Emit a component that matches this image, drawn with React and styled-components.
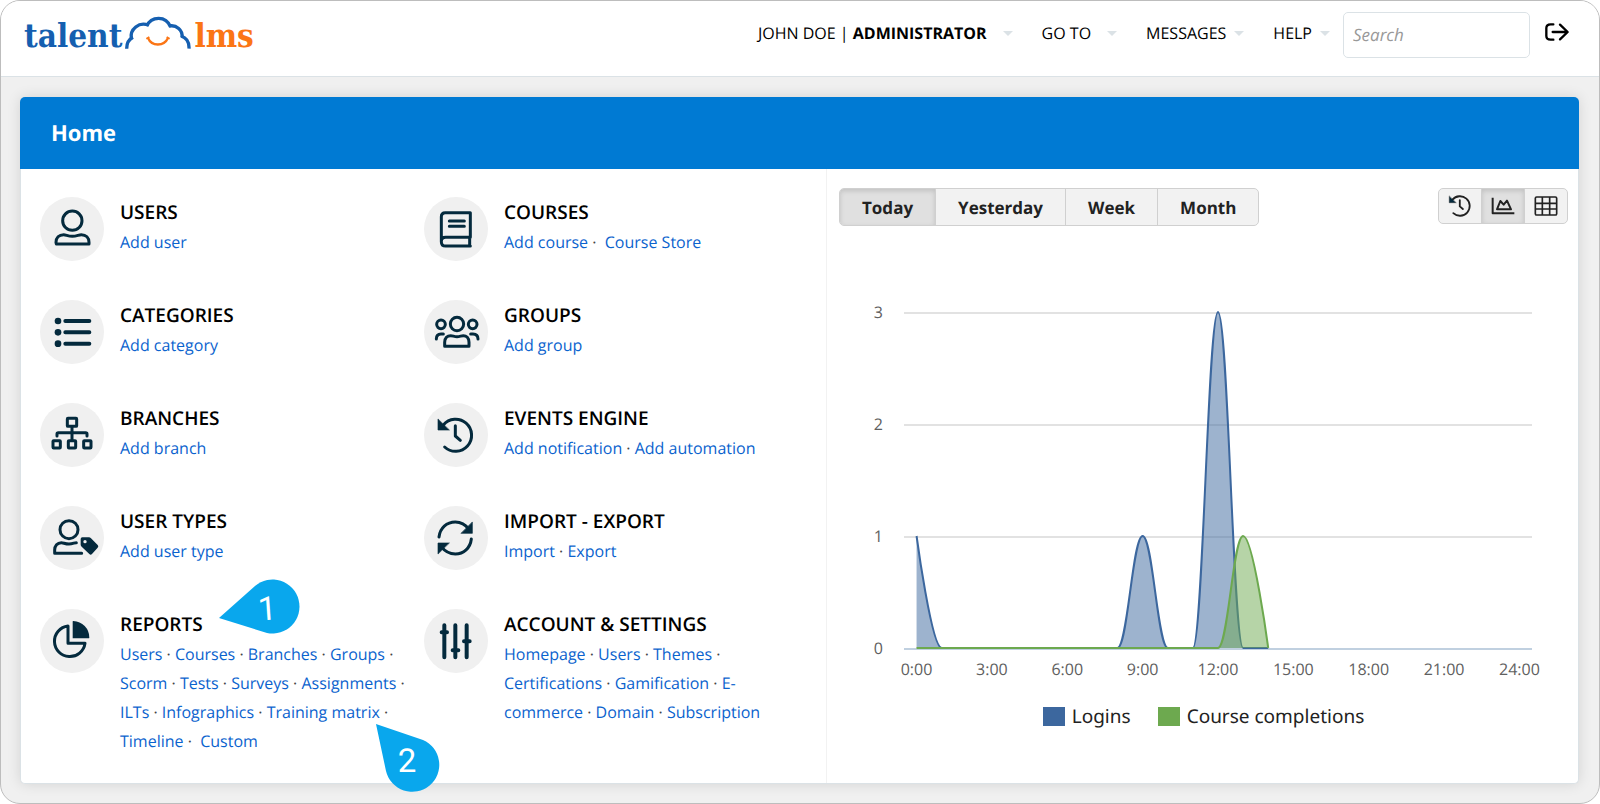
import React from "react";
import styled, { createGlobalStyle, css } from "styled-components";

const GlobalStyle = createGlobalStyle`
  *, *::before, *::after { box-sizing: border-box; }
  body {
    margin: 0;
    background: #fff;
    color: #000;
    font-family: "Open Sans", "Noto Sans", sans-serif;
    text-rendering: geometricPrecision;
  }
  button, input { font: inherit; color: inherit; text-rendering: inherit; }
`;

const ink = "#042a3d";

const Page = styled.div`
  min-height: 100vh;
  display: flex;
  flex-direction: column;
  background: #f0f0f0;
  border: 1px solid #bdbdbd;
  border-radius: 20px;
  overflow: hidden;
`;

const TopBar = styled.header`
  display: flex;
  align-items: flex-start;
  justify-content: space-between;
  height: 76px;
  padding: 11px 29px 0 23px;
  background: #fff;
  border-bottom: 1px solid #dbe2e6;
`;

const Logo = styled.a`
  display: flex;
  align-items: flex-start;
  gap: 3px;
  height: 48px;
  font-family: "DejaVu Serif Condensed", "DejaVu Serif", serif;
  font-stretch: condensed;
  font-size: 33px;
  font-weight: 700;
  line-height: 48px;
  text-decoration: none;
  color: #155fb0;
`;

const LogoAccent = styled.span`
  color: #fb7515;
`;

const Nav = styled.nav`
  display: flex;
  align-items: flex-start;
`;

const NavButton = styled.button`
  display: flex;
  align-items: center;
  gap: ${(p) => (p.$wide ? 16 : 8)}px;
  height: 42px;
  margin-right: ${(p) => (p.$last ? 13 : 29)}px;
  padding: 0;
  border: 0;
  background: none;
  font-size: 16px;
  white-space: nowrap;
  cursor: pointer;

  b { font-weight: 700; }

  &::after {
    content: "";
    border: 5px solid transparent;
    border-top-color: #dbe2e6;
    border-bottom: 0;
  }
`;

const Search = styled.input`
  width: 187px;
  height: 46px;
  padding: 0 9px 2px;
  border: 1px solid #dbe2e6;
  border-radius: 5px;
  background: #fff;
  font-size: 17px;
  font-style: italic;

  &::placeholder { color: #999; opacity: 1; }
`;

const IconButton = styled.button`
  display: flex;
  margin: 8px 0 0 14px;
  padding: 0;
  border: 0;
  background: none;
  cursor: pointer;
`;

const Main = styled.main`
  flex: 1;
  display: flex;
  padding: 20px 20px 19px 19px;
`;

const Card = styled.section`
  flex: 1;
  display: flex;
  flex-direction: column;
  border: 1px solid #dbe2e6;
  border-top: 0;
  border-radius: 5px;
  background: #fff;
  box-shadow: 0 0 14px rgba(0, 0, 0, 0.12);
`;

const CardHeader = styled.h1`
  margin: 0 -1px;
  padding: 0 31px;
  border-radius: 5px 5px 0 0;
  background: #007ad3;
  color: #fff;
  font-size: 22px;
  font-weight: 700;
  line-height: 72px;
`;

const Columns = styled.div`
  flex: 1;
  display: grid;
  grid-template-columns: 806fr 751fr;
`;

const Tiles = styled.div`
  display: grid;
  grid-template-columns: 1fr 1fr;
  grid-auto-rows: minmax(103px, auto);
  align-content: start;
  padding: 28px 18px 24px 19px;
  border-right: 1px solid #f2f2f2;
`;

const Tile = styled.section`
  position: relative;
  display: flex;
  gap: 16px;
  padding-right: 12px;
`;

const Badge = styled.div`
  flex: none;
  width: 64px;
  height: 64px;
  border-radius: 50%;
  background: #f0f0f0;

  svg { display: block; }
`;

const TileTitle = styled.h2`
  margin: 0;
  font-size: 19px;
  font-weight: 600;
  line-height: 31px;
`;

const Links = styled.p`
  margin: 0;
  color: #444;
  font-size: 16px;
  line-height: 29px;

  a {
    color: #0b63ce;
    text-decoration: none;
  }
`;

const Callout = styled.svg`
  position: absolute;
  left: ${(p) => p.$left}px;
  top: ${(p) => p.$top}px;
  z-index: 1;
  overflow: visible;

  path { fill: #09a7ed; }
  text {
    fill: #fff;
    font: 400 33px Roboto, sans-serif;
    text-anchor: middle;
  }
`;

const Report = styled.section`
  padding: 19px 10px 24px 12px;
`;

const Toolbar = styled.div`
  display: flex;
  justify-content: space-between;
  align-items: flex-start;
`;

const Segments = styled.div`
  display: flex;
  overflow: hidden;
  border: 1px solid #d0d0d0;
  border-radius: 5px;
  background: #f2f2f2;
`;

const Segment = styled.button`
  display: flex;
  align-items: center;
  justify-content: center;
  height: ${(p) => (p.$icon ? 34 : 36)}px;
  padding: 0 ${(p) => (p.$icon ? 9 : 22)}px;
  border: 0;
  background: none;
  color: #222;
  font-size: 17px;
  font-weight: 700;
  cursor: pointer;

  & + & { border-left: 1px solid #d0d0d0; }

  ${(p) =>
    p.$active &&
    css`
      background: #e0e0e0;
      box-shadow: inset 0 2px 5px rgba(0, 0, 0, 0.14);
    `}
`;

const ChartSvg = styled.svg`
  display: block;
  width: 100%;
  margin-top: 54px;

  text {
    fill: #606060;
    font-size: 16px;
  }
`;

const Legend = styled.ul`
  display: flex;
  justify-content: center;
  gap: 27px;
  margin: 12px 0 0;
  padding: 0;
  list-style: none;
  color: #222;
  font-family: "Noto Sans", sans-serif;
  font-size: 19px;
  line-height: 28px;
`;

const LegendItem = styled.li`
  display: flex;
  align-items: center;
  gap: 7px;

  &::before {
    content: "";
    width: 22px;
    height: 19px;
    background: ${(p) => p.$color};
  }
`;

/* ---------- icons ---------- */

const shapes = {
  user: (
    <>
      <circle cx="97" cy="71" r="29" />
      <path d="M49 141 H147 V136 C147 123 138 113 124 113 C116 113 110 118 97 118 C84 118 78 113 71 113 C57 113 48 123 48 136 Z" />
    </>
  ),
  list: (
    <>
      <g fill={ink} stroke="none">
        <circle cx="54" cy="63" r="10" />
        <circle cx="54" cy="97" r="10" />
        <circle cx="54" cy="131" r="10" />
      </g>
      <path d="M76 63 H148 M76 97 H148 M76 131 H148" strokeWidth="12" />
    </>
  ),
  branches: (
    <>
      <rect x="82" y="46" width="28" height="24" rx="2" />
      <rect x="39" y="113" width="22" height="22" rx="2" />
      <rect x="85" y="113" width="22" height="22" rx="2" />
      <rect x="131" y="113" width="22" height="22" rx="2" />
      <path d="M96 72 V112 M51 99 V93 Q51 89 55 89 H137 Q141 89 141 93 V99" />
    </>
  ),
  userTypes: (
    <>
      <circle cx="87" cy="71" r="27" />
      <path d="M109 110 C103 110 98 114 87 114 C76 114 70 110 64 110 C52 110 44 120 44 132 V142 H125" />
      <path
        d="M127 94 H147 Q150 94 153 97 L173 117 Q177 121 173 125 L156 144 Q152 148 148 144 L125 122 Q122 119 122 116 V99 Q122 94 127 94 Z"
        fill={ink}
        stroke="none"
      />
      <circle cx="135" cy="107" r="5" fill="#f0f0f0" stroke="none" />
    </>
  ),
  pie: (
    <>
      <path d="M98 37 Q98 36 100 36 A50 50 0 0 1 148 86 L147 88 H98 Z" fill={ink} stroke="none" />
      <path d="M84 51 A46 46 0 1 0 135 103 H84 Z" />
    </>
  ),
  book: (
    <>
      <path d="M139 121 V47 H64 Q52 47 52 59 V134 Q52 147 65 147 H139 M137 121 V146 M139 121 H65 Q52 121 52 134" />
      <path d="M76 72 H121 M76 88 H121" />
    </>
  ),
  groups: (
    <>
      <circle cx="99" cy="72" r="20" />
      <circle cx="51" cy="73" r="13" />
      <circle cx="146" cy="73" r="13" />
      <path d="M62 139 H135 V127 C135 114 127 107 118 107 C112 107 107 110 99 110 C91 110 86 107 80 107 C70 107 62 114 62 127 Z" />
      <path d="M37 117 C37 107 42 102 51 102 H58 M162 117 C162 107 157 102 147 102 H140" />
    </>
  ),
  history: (
    <>
      <path d="M58 66 A48 48 0 1 1 62 132" />
      <path d="M42 49 V81 H75 Z" fill={ink} strokeWidth="2" />
      <path d="M94 68 V99 L109 112" />
    </>
  ),
  refresh: (
    <>
      <path d="M45 93 C48 66 68 48 94 48 C111 48 123 54 135 70 M142 99 C139 126 119 144 94 144 C77 144 64 138 52 122" />
      <path d="M145 49 V82 H112 Z M42 143 V111 H75 Z" fill={ink} strokeWidth="2" />
    </>
  ),
  sliders: (
    <path
      d="M61 49 V145 M94 49 V145 M128 49 V145 M53 70 H69 M86 124 H103 M120 97 H137"
      strokeWidth="12"
    />
  ),
};

function Icon({ name, size = 64, viewBox = "0 0 192 192", color = ink }) {
  return (
    <svg
      width={size}
      height={size}
      viewBox={viewBox}
      fill="none"
      stroke={color}
      strokeWidth="9"
      strokeLinecap="round"
      strokeLinejoin="round"
      aria-hidden="true"
    >
      {shapes[name]}
    </svg>
  );
}

function CloudMark() {
  return (
    <svg width="66" height="48" viewBox="0 0 198 144" fill="none" aria-hidden="true">
      <g stroke="#155fb0" strokeWidth="10">
        <path d="M5 110 C5 94 10 83 24 76" />
        <path d="M19 80 C14 52 42 28 71 40" />
        <path d="M66 42 C72 26 86 19 101 19 C117 19 130 28 137 45" />
        <path d="M133 42 C154 38 174 54 171 76" />
        <path d="M168 72 C184 77 193 91 192 110" />
      </g>
      <path d="M64 80 L73 75 M125 75 L134 80" stroke="#fb7515" strokeWidth="5" />
      <path d="M69 78 C80 104 117 104 129 78" stroke="#fb7515" strokeWidth="7" />
    </svg>
  );
}

/* ---------- tiles ---------- */

const tiles = [
  { title: "USERS", icon: "user", links: ["Add user"] },
  { title: "COURSES", icon: "book", links: ["Add course", "Course Store"], tight: true },
  { title: "CATEGORIES", icon: "list", links: ["Add category"] },
  { title: "GROUPS", icon: "groups", links: ["Add group"] },
  { title: "BRANCHES", icon: "branches", links: ["Add branch"] },
  { title: "EVENTS ENGINE", icon: "history", links: ["Add notification", "Add automation"] },
  { title: "USER TYPES", icon: "userTypes", links: ["Add user type"] },
  { title: "IMPORT - EXPORT", icon: "refresh", links: ["Import", "Export"] },
  {
    title: "REPORTS",
    icon: "pie",
    tight: true,
    callouts: true,
    links: [
      "Users", "Courses", "Branches", "Groups", "Scorm", "Tests", "Surveys",
      "Assignments", "ILTs", "Infographics", "Training matrix", "Timeline", "Custom",
    ],
  },
  {
    title: "ACCOUNT & SETTINGS",
    icon: "sliders",
    links: [
      "Homepage", "Users", "Themes", "Certifications", "Gamification",
      "E-commerce", "Domain", "Subscription",
    ],
  },
];

function TileLinks({ links, tight }) {
  const last = links.length - 1;
  return (
    <Links>
      {links.map((label, i) => (
        <React.Fragment key={label}>
          {i > 0 && (tight && i === last ? "\u00a0· \u00a0" : "\u00a0· ")}
          <a href="#">{label}</a>
        </React.Fragment>
      ))}
    </Links>
  );
}

/* ---------- chart ---------- */

const plot = { left: 65, right: 693, step: 112, bottom: 369 };
const slot = (plot.right - plot.left) / 25;
const logins = [1, 0, 0, 0, 0, 0, 0, 0, 0, 1, 0, 0, 3, 0, 0];
const completions = [0, 0, 0, 0, 0, 0, 0, 0, 0, 0, 0, 0, 0, 1, 0];

const toPoints = (values) =>
  values.map((v, i) => ({
    x: plot.left + slot * (i + 0.5),
    y: plot.bottom - 1 - plot.step * v,
  }));

/* Smoothed line that never overshoots its neighbouring values. */
function spline(points) {
  const weight = (a, b) => (1.5 * a + b) / 2.5;
  let d = `M${points[0].x} ${points[0].y}`;
  let out = points[0];
  for (let i = 1; i < points.length; i++) {
    const p = points[i];
    const prev = points[i - 1];
    const next = points[i + 1];
    let into = p;
    let leave = p;
    if (next) {
      const lx = weight(p.x, prev.x);
      const rx = weight(p.x, next.x);
      let ly = weight(p.y, prev.y);
      let ry = weight(p.y, next.y);
      const shift = ((ry - ly) * (rx - p.x)) / (rx - lx) + p.y - ry;
      ly += shift;
      ry += shift;
      const clamp = (v, a, b) => Math.min(Math.max(v, Math.min(a, b)), Math.max(a, b));
      const l2 = clamp(ly, prev.y, p.y);
      if (l2 !== ly) {
        ly = l2;
        ry = 2 * p.y - ly;
      }
      const r2 = clamp(ry, next.y, p.y);
      if (r2 !== ry) {
        ry = r2;
        ly = 2 * p.y - ry;
      }
      into = { x: lx, y: ly };
      leave = { x: rx, y: ry };
    }
    d += ` C${out.x} ${out.y} ${into.x} ${into.y} ${p.x} ${p.y}`;
    out = leave;
  }
  return d;
}

function Area({ values, color }) {
  const points = toPoints(values);
  const line = spline(points);
  const base = plot.bottom - 1;
  return (
    <g>
      <path d={`${line} L${points[points.length - 1].x} ${base} L${points[0].x} ${base} Z`} fill={color} fillOpacity="0.5" />
      <path d={line} fill="none" stroke={color} strokeWidth="2" strokeLinejoin="round" />
    </g>
  );
}

function ActivityChart() {
  return (
    <ChartSvg viewBox="0 0 729 410" role="img" aria-label="Logins and course completions today">
      {[3, 2, 1, 0].map((v) => {
        const y = plot.bottom - plot.step * v;
        return (
          <g key={v}>
            <path d={`M${plot.left} ${y} H${plot.right}`} stroke={v ? "#e2e2e2" : "#c0d0e0"} strokeWidth="2" />
            <text x="44" y={y + 5} textAnchor="end">{v}</text>
          </g>
        );
      })}
      <Area values={logins} color="#3c679e" />
      <Area values={completions} color="#6da94f" />
      {[0, 3, 6, 9, 12, 15, 18, 21, 24].map((h) => (
        <text key={h} x={plot.left + slot * (h + 0.5)} y="395" textAnchor="middle">{`${h}:00`}</text>
      ))}
    </ChartSvg>
  );
}

export default function App() {
  return (
    <>
      <GlobalStyle />
      <Page>
        <TopBar>
          <Logo href="#" aria-label="talentlms">
            <span>talent</span>
            <CloudMark />
            <LogoAccent>lms</LogoAccent>
          </Logo>
          <Nav>
            <NavButton $wide>
              <span>JOHN DOE | <b>ADMINISTRATOR</b></span>
            </NavButton>
            <NavButton $wide>GO TO</NavButton>
            <NavButton>MESSAGES</NavButton>
            <NavButton $last>HELP</NavButton>
            <Search type="search" placeholder="Search" aria-label="Search" />
            <IconButton aria-label="Log out">
              <svg width="26" height="24" viewBox="0 0 78 72" fill="none" stroke="#000" strokeWidth="7" strokeLinecap="round" strokeLinejoin="round">
                <path d="M28 13 H20 Q7 13 7 24 V48 Q7 59 20 59 H28" />
                <path d="M26 36 H70 M48 14 L71 36 L48 58" />
              </svg>
            </IconButton>
          </Nav>
        </TopBar>
        <Main>
          <Card>
            <CardHeader>Home</CardHeader>
            <Columns>
              <Tiles>
                {tiles.map((tile) => (
                  <Tile key={tile.title}>
                    <Badge>
                      <Icon name={tile.icon} />
                    </Badge>
                    <div>
                      <TileTitle>{tile.title}</TileTitle>
                      <TileLinks links={tile.links} tight={tile.tight} />
                    </div>
                    {tile.callouts && (
                      <>
                        <Callout $left={179} $top={-29} width="80" height="54">
                          <path d="M0 38 L36 6 A27 27 0 1 1 48 53 Z" />
                          <text x="48" y="40" transform="rotate(-4 48 27)">1</text>
                        </Callout>
                        <Callout $left={336} $top={115} width="63" height="68">
                          <path d="M0 0 L47 16 A27 27 0 1 1 10 47 Z" />
                          <text x="31" y="48">2</text>
                        </Callout>
                      </>
                    )}
                  </Tile>
                ))}
              </Tiles>
              <Report>
                <Toolbar>
                  <Segments>
                    <Segment $active>Today</Segment>
                    <Segment>Yesterday</Segment>
                    <Segment>Week</Segment>
                    <Segment>Month</Segment>
                  </Segments>
                  <Segments>
                    <Segment $icon aria-label="History">
                      <Icon name="history" size={24} viewBox="36 38 118 118" color="#222" />
                    </Segment>
                    <Segment $icon $active aria-label="Chart">
                      <svg width="24" height="24" viewBox="0 0 72 72" fill="none" stroke="#222" strokeWidth="6" strokeLinejoin="round">
                        <path d="M5 11 V58 H70" />
                        <path d="M18 46 L28 21 L38 32 L48 20 L60 46 Z" />
                      </svg>
                    </Segment>
                    <Segment $icon aria-label="Table">
                      <svg width="24" height="24" viewBox="0 0 72 72" fill="none" stroke="#222" strokeWidth="5">
                        <rect x="4" y="9" width="64" height="54" rx="4" />
                        <path d="M25 9 V63 M47 9 V63 M4 28 H68 M4 45 H68" />
                      </svg>
                    </Segment>
                  </Segments>
                </Toolbar>
                <ActivityChart />
                <Legend>
                  <LegendItem $color="#3c679e">Logins</LegendItem>
                  <LegendItem $color="#6da94f">Course completions</LegendItem>
                </Legend>
              </Report>
            </Columns>
          </Card>
        </Main>
      </Page>
    </>
  );
}
